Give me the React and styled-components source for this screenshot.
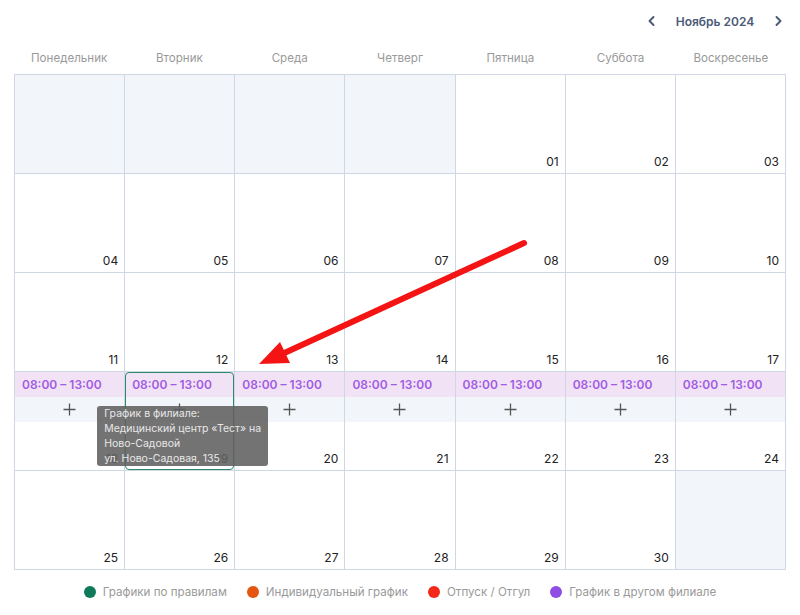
import React from 'react'
import styled, { createGlobalStyle } from 'styled-components'

const Global = createGlobalStyle`
  body {
    margin: 0;
    background: #fff;
    font-family: Inter, "Noto Sans", sans-serif;
  }
`

const Page = styled.div`
  position: relative;
  width: 800px;
  height: 615px;
  padding: 0 14px;
  box-sizing: border-box;
`

const Header = styled.div`
  display: flex;
  justify-content: flex-end;
  align-items: center;
  height: 42px;
  gap: 6px;
`

const NavButton = styled.button`
  border: none;
  background: none;
  padding: 0;
  width: 16px;
  height: 16px;
  display: flex;
  align-items: center;
  justify-content: center;
  cursor: pointer;
`

const Month = styled.div`
  font-size: 12px;
  font-weight: 600;
  color: #4b5b78;
  width: 98px;
  text-align: center;
`

const Weekdays = styled.div`
  display: grid;
  grid-template-columns: repeat(7, 1fr);
  height: 32px;
  align-items: center;
`

const Weekday = styled.div`
  text-align: center;
  font-size: 11.6px;
  color: #9a9a9a;
  padding-bottom: 1px;
`

const Grid = styled.div`
  display: grid;
  grid-template-columns: repeat(7, 1fr);
  grid-auto-rows: 99px;
  border-top: 1px solid #cfd7e4;
  border-left: 1px solid #cfd7e4;
`

const Cell = styled.div`
  position: relative;
  display: flex;
  flex-direction: column;
  border-right: 1px solid #cfd7e4;
  border-bottom: 1px solid #cfd7e4;
  background: ${p => (p.$muted ? '#f2f5fa' : '#fff')};
  min-width: 0;
`

const Shift = styled.div`
  height: 25px;
  background: #f1e3f5;
  color: #a25ce3;
  font-size: 12px;
  font-weight: 600;
  display: flex;
  align-items: center;
  padding-left: 7px;
`

const AddRow = styled.div`
  height: 25px;
  background: #f2f5fa;
  display: flex;
  align-items: center;
  justify-content: center;
`

const DateNum = styled.div`
  margin-top: auto;
  text-align: right;
  font-size: 12px;
  color: #222;
  padding: 0 6px 4px 0;
`

const Selected = styled.div`
  position: absolute;
  inset: 0;
  border: 1px solid #2b8a6c;
  border-radius: 4px;
  pointer-events: none;
`

const Tooltip = styled.div`
  position: absolute;
  left: -28px;
  top: 34px;
  min-width: 165px;
  width: max-content;
  box-sizing: border-box;
  padding: 0 7px;
  background: rgba(96, 96, 96, 0.88);
  color: #e8e8e8;
  font-size: 10.5px;
  line-height: 15px;
  white-space: nowrap;
  border-radius: 3px;
  z-index: 2;
`

const Legend = styled.div`
  display: flex;
  justify-content: center;
  gap: 20px;
  padding-top: 15px;
`

const LegendItem = styled.div`
  display: flex;
  align-items: center;
  gap: 7px;
  font-size: 11.6px;
  color: #9a9a9a;
`

const Dot = styled.span`
  width: 12px;
  height: 12px;
  border-radius: 50%;
  background: ${p => p.$color};
`

const Arrow = styled.svg`
  position: absolute;
  left: 0;
  top: 0;
  pointer-events: none;
  z-index: 3;
`

const days = ['Понедельник', 'Вторник', 'Среда', 'Четверг', 'Пятница', 'Суббота', 'Воскресенье']

const pad = n => (n < 10 ? '0' + n : '' + n)

const Chevron = ({ left }) => (
  <svg width="12" height="12" viewBox="0 0 12 12">
    <path
      d={left ? 'M7.5 2 L3.5 6 L7.5 10' : 'M4.5 2 L8.5 6 L4.5 10'}
      fill="none"
      stroke="#4b5b78"
      strokeWidth="2"
      strokeLinecap="round"
      strokeLinejoin="round"
    />
  </svg>
)

const PlusIcon = () => (
  <svg width="13" height="13" viewBox="0 0 13 13">
    <path d="M6.5 0.5 V12.5 M0.5 6.5 H12.5" stroke="#555" strokeWidth="1.3" />
  </svg>
)

const legend = [
  ['#0e7a5a', 'Графики по правилам'],
  ['#e4560f', 'Индивидуальный график'],
  ['#f1291b', 'Отпуск / Отгул'],
  ['#8e4fe2', 'График в другом филиале'],
]

export default function App() {
  // ноябрь 2024 начинается с пятницы
  const cells = []
  for (let i = 0; i < 35; i++) {
    const d = i - 3
    cells.push(d >= 1 && d <= 30 ? d : null)
  }

  return (
    <Page>
      <Global />
      <Header>
        <NavButton><Chevron left /></NavButton>
        <Month>Ноябрь 2024</Month>
        <NavButton><Chevron /></NavButton>
      </Header>
      <Weekdays>
        {days.map(d => <Weekday key={d}>{d}</Weekday>)}
      </Weekdays>
      <Grid>
        {cells.map((d, i) => {
          const shift = d >= 18 && d <= 24
          return (
            <Cell key={i} $muted={d === null}>
              {shift && <Shift>08:00 – 13:00</Shift>}
              {shift && <AddRow><PlusIcon /></AddRow>}
              {d && <DateNum>{pad(d)}</DateNum>}
              {d === 19 && <Selected />}
              {d === 19 && (
                <Tooltip>
                  График в филиале:<br />
                  Медицинский центр «Тест» на<br />
                  Ново-Садовой<br />
                  ул. Ново-Садовая, 135
                </Tooltip>
              )}
            </Cell>
          )
        })}
      </Grid>
      <Legend>
        {legend.map(([c, t]) => (
          <LegendItem key={t}><Dot $color={c} />{t}</LegendItem>
        ))}
      </Legend>
      <Arrow width="800" height="615">
        <line x1="524" y1="243" x2="280" y2="355" stroke="#f51414" strokeWidth="6" strokeLinecap="round" />
        <polygon points="259,364 280,342 290,363" fill="#f51414" />
      </Arrow>
    </Page>
  )
}
